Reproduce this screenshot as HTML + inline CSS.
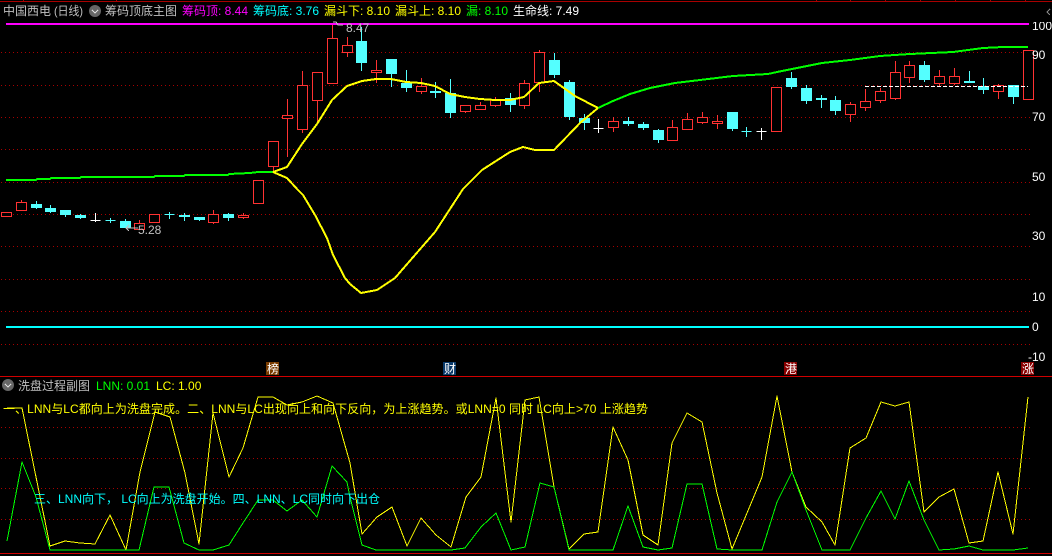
<!DOCTYPE html>
<html lang="zh"><head><meta charset="utf-8"><title>中国西电</title>
<style>
html,body{margin:0;padding:0;background:#000;width:1052px;height:556px;overflow:hidden}
svg{display:block;font-family:"Liberation Sans","WenQuanYi Zen Hei","Noto Sans CJK SC",sans-serif;font-size:12px}
svg path,svg rect,svg line,svg polyline{shape-rendering:crispEdges}
.r path,.r rect{stroke:#ff3232;fill:#000}
.c path,.c rect{stroke:#54ffff;fill:#54ffff}
.w path{stroke:#fff;fill:none}
.g{stroke:#a80000;stroke-width:1;stroke-dasharray:1 3}
.l{fill:none;stroke-linejoin:round}
.ax{fill:#fff;font-size:12px}
.mk{fill:#fff;font-size:12px}
</style></head><body>
<svg width="1052" height="556" viewBox="0 0 1052 556" xmlns="http://www.w3.org/2000/svg">
<defs><clipPath id="c100"><rect x="1030" y="22" width="22" height="12"/></clipPath></defs>
<rect width="1052" height="556" fill="#000"/>
<!-- frame lines -->
<line x1="0" x2="1052" y1="1.5" y2="1.5" stroke="#a80000"/>
<path d="M23.5 0V1M116.5 0V1M816.5 0V1M850.5 0V1M885.5 0V1M920.5 0V1M955.5 0V1M990.5 0V1M1025.5 0V1" stroke="#a80000"/>
<line x1="0" x2="1052" y1="376.5" y2="376.5" stroke="#d00000"/>
<line x1="0" x2="1052" y1="553.5" y2="553.5" stroke="#d00000"/>
<!-- grid -->
<g class="g">
<line x1="1" x2="1030" y1="52.5" y2="52.5"/><line x1="1" x2="1030" y1="85.5" y2="85.5"/>
<line x1="1" x2="1030" y1="117.5" y2="117.5"/><line x1="1" x2="1030" y1="149.5" y2="149.5"/>
<line x1="1" x2="1030" y1="182.5" y2="182.5"/><line x1="1" x2="1030" y1="214.5" y2="214.5"/>
<line x1="1" x2="1030" y1="246.5" y2="246.5"/><line x1="1" x2="1030" y1="279.5" y2="279.5"/>
<line x1="1" x2="1030" y1="311.5" y2="311.5"/><line x1="1" x2="1030" y1="344.5" y2="344.5"/>
<line x1="1" x2="1030" y1="427.5" y2="427.5"/><line x1="1" x2="1030" y1="458.5" y2="458.5"/>
<line x1="1" x2="1030" y1="488.5" y2="488.5"/><line x1="1" x2="1030" y1="519.5" y2="519.5"/>
</g>
<!-- red candles -->
<g class="r">
<rect x="1.5" y="212.5" width="10" height="4"/>
<path d="M21.5 200V203"/><rect x="16.5" y="202.5" width="10" height="8"/>
<path d="M139.5 220V224"/><rect x="134.5" y="223.5" width="10" height="6"/>
<rect x="149.5" y="214.5" width="10" height="8"/>
<path d="M213.5 210V224"/><rect x="208.5" y="214.5" width="10" height="8"/>
<path d="M243.5 213V219"/><rect x="238.5" y="215.5" width="10" height="2"/>
<rect x="253.5" y="180.5" width="10" height="23"/>
<path d="M273.5 166V172"/><rect x="268.5" y="141.5" width="10" height="25"/>
<path d="M287.5 99V157"/><rect x="282.5" y="115.5" width="10" height="3"/>
<path d="M302.5 71V133"/><rect x="297.5" y="85.5" width="10" height="44"/>
<path d="M317.5 100V124"/><rect x="312.5" y="72.5" width="10" height="28"/>
<path d="M332.5 24V39"/><rect x="327.5" y="38.5" width="10" height="45"/>
<path d="M347.5 37V57"/><rect x="342.5" y="45.5" width="10" height="7"/>
<path d="M376.5 60V83"/><rect x="371.5" y="70.5" width="10" height="2"/>
<path d="M421.5 78V94"/><rect x="416.5" y="86.5" width="10" height="5"/>
<path d="M465.5 105V113"/><rect x="460.5" y="105.5" width="10" height="6"/>
<path d="M480.5 102V110"/><rect x="475.5" y="105.5" width="10" height="4"/>
<path d="M495.5 97V107"/><rect x="490.5" y="99.5" width="10" height="6"/>
<path d="M524.5 80V109"/><rect x="519.5" y="83.5" width="10" height="22"/>
<path d="M539.5 50V92"/><rect x="534.5" y="52.5" width="10" height="30"/>
<path d="M613.5 117V132"/><rect x="608.5" y="121.5" width="10" height="6"/>
<path d="M672.5 120V128"/><rect x="667.5" y="127.5" width="10" height="13"/>
<path d="M687.5 113V120"/><rect x="682.5" y="119.5" width="10" height="10"/>
<path d="M702.5 112V124"/><rect x="697.5" y="117.5" width="10" height="5"/>
<path d="M717.5 115V129"/><rect x="712.5" y="121.5" width="10" height="2"/>
<rect x="771.5" y="87.5" width="10" height="44"/>
<path d="M850.5 102V122"/><rect x="845.5" y="104.5" width="10" height="10"/>
<path d="M865.5 89V111"/><rect x="860.5" y="101.5" width="10" height="6"/>
<path d="M880.5 88V103"/><rect x="875.5" y="91.5" width="10" height="9"/>
<path d="M895.5 61V100"/><rect x="890.5" y="72.5" width="10" height="26"/>
<path d="M909.5 61V83"/><rect x="904.5" y="65.5" width="10" height="12"/>
<path d="M939.5 70V86"/><rect x="934.5" y="76.5" width="10" height="7"/>
<path d="M954.5 68V85"/><rect x="949.5" y="76.5" width="10" height="7"/>
<path d="M998.5 84V99"/><rect x="993.5" y="85.5" width="10" height="6"/>
<rect x="1023.5" y="50.5" width="10" height="49"/>
</g>
<!-- cyan candles -->
<g class="c">
<path d="M36.5 201V209"/><rect x="31.5" y="204.5" width="10" height="3"/>
<path d="M50.5 205V213"/><rect x="45.5" y="208.5" width="10" height="3"/>
<path d="M65.5 210V217"/><rect x="60.5" y="210.5" width="10" height="4"/>
<path d="M80.5 214V219"/><rect x="75.5" y="215.5" width="10" height="2"/>
<path d="M105.5 220.5H115.5M110.5 218V223"/>
<path d="M125.5 219V228"/><rect x="120.5" y="221.5" width="10" height="6"/>
<path d="M164.5 214.5H174.5M169.5 212V219"/>
<path d="M184.5 213V221"/><rect x="179.5" y="215.5" width="10" height="1"/>
<path d="M199.5 217V221"/><rect x="194.5" y="217.5" width="10" height="2"/>
<path d="M228.5 213V221"/><rect x="223.5" y="214.5" width="10" height="3"/>
<path d="M361.5 27V71"/><rect x="356.5" y="41.5" width="10" height="21"/>
<path d="M391.5 59V87"/><rect x="386.5" y="59.5" width="10" height="14"/>
<path d="M406.5 70V92"/><rect x="401.5" y="83.5" width="10" height="4"/>
<path d="M435.5 82V98"/><rect x="430.5" y="91.5" width="10" height="1"/>
<path d="M450.5 79V118"/><rect x="445.5" y="93.5" width="10" height="19"/>
<path d="M510.5 93V112"/><rect x="505.5" y="98.5" width="10" height="6"/>
<path d="M554.5 53V78"/><rect x="549.5" y="60.5" width="10" height="14"/>
<path d="M569.5 80V120"/><rect x="564.5" y="82.5" width="10" height="34"/>
<path d="M584.5 114V130"/><rect x="579.5" y="118.5" width="10" height="4"/>
<path d="M628.5 117V126"/><rect x="623.5" y="121.5" width="10" height="2"/>
<path d="M643.5 122V130"/><rect x="638.5" y="124.5" width="10" height="3"/>
<path d="M658.5 129V143"/><rect x="653.5" y="130.5" width="10" height="9"/>
<path d="M732.5 112V131"/><rect x="727.5" y="112.5" width="10" height="16"/>
<path d="M741.5 131.5H751.5M746.5 127V137"/>
<path d="M791.5 72V89"/><rect x="786.5" y="78.5" width="10" height="8"/>
<path d="M806.5 85V104"/><rect x="801.5" y="88.5" width="10" height="12"/>
<path d="M821.5 95V108"/><rect x="816.5" y="98.5" width="10" height="1"/>
<path d="M835.5 96V115"/><rect x="830.5" y="100.5" width="10" height="10"/>
<path d="M924.5 61V82"/><rect x="919.5" y="65.5" width="10" height="14"/>
<path d="M969.5 71V83"/><rect x="964.5" y="81.5" width="10" height="1"/>
<path d="M983.5 78V94"/><rect x="978.5" y="86.5" width="10" height="3"/>
<path d="M1013.5 97V104"/><rect x="1008.5" y="85.5" width="10" height="11"/>
</g>
<!-- white dojis -->
<g class="w">
<path d="M90.5 220.5H100.5M95.5 213V222"/>
<path d="M593.5 128.5H603.5M598.5 119V133"/>
<path d="M756.5 131.5H766.5M761.5 128V140"/>
</g>
<!-- dashed -->
<line x1="865" x2="1028" y1="86.5" y2="86.5" stroke="#fff" stroke-dasharray="4 2"/>
<!-- magenta / cyan -->
<rect x="6" y="23" width="1023" height="2" fill="#ff00ff"/>
<rect x="6" y="326" width="1023" height="2" fill="#00ffff"/>
<!-- life line green -->
<polyline class="l" stroke="#00ff00" stroke-width="2" points="6,180 36,180 37,179 50,179 51,178 80,178 81,177 154,177 155,176 184,176 185,175 228,175 229,174 250,173 258,172 273,172"/>
<polyline class="l" stroke="#00ff00" stroke-width="2" points="598,108 613,101 630,94 650,88 675,83 700,80 733,76 768,74 777,72 797,68 822,63 850,60 880,56 910,54 953,52 983,48 1003,47 1028,47"/>
<!-- yellow curves -->
<polyline class="l" stroke="#ffff00" stroke-width="2" points="273,172 287,167 302,144 317,124 332,100 347,86 362,81 376,79 391,79 406,82 421,83 435,86 450,94 465,97 480,99 495,100 510,100 524,97 539,83 554,81 575,96 598,108"/>
<polyline class="l" stroke="#ffff00" stroke-width="2" points="273,172 287,178 298,190 303,195 315,215 327,238 333,255 345,278 350,284 361,293 377,290 395,278 408,263 435,232 463,189 482,170 510,152 523,147 535,150 554,150 580,123 598,108"/>
<!-- extreme price annotations -->
<path d="M333 22H336L338 25H343" fill="none" stroke="#bfbfbf"/>
<text x="346" y="32" fill="#c0c0c0">8.47</text>
<path d="M129 225L126 228L129 231M126 228H138" fill="none" stroke="#bfbfbf"/>
<text x="138" y="234" fill="#c0c0c0">5.28</text>
<!-- axis labels -->
<text class="ax" x="1032" y="30" clip-path="url(#c100)">100</text>
<text class="ax" x="1032" y="59">90</text>
<text class="ax" x="1032" y="121">70</text>
<text class="ax" x="1032" y="181">50</text>
<text class="ax" x="1032" y="240">30</text>
<text class="ax" x="1032" y="301">10</text>
<text class="ax" x="1032" y="331">0</text>
<text class="ax" x="1028" y="361">-10</text>
<path d="M1050 9L1047 12L1050 15" fill="none" stroke="#888"/>
<!-- event markers -->
<rect x="266" y="362" width="13" height="13" fill="#7a3c00"/><text class="mk" x="267" y="373">榜</text>
<rect x="443" y="362" width="13" height="13" fill="#0a3a6a"/><text class="mk" x="444" y="373">财</text>
<rect x="784" y="362" width="13" height="13" fill="#880000"/><text class="mk" x="785" y="373">港</text>
<rect x="1021" y="362" width="13" height="13" fill="#880000"/><text class="mk" x="1022" y="373">涨</text>
<!-- header -->
<text x="3" y="15" fill="#c0c0c0">中国西电</text>
<text x="54" y="15" fill="#c0c0c0" textLength="29" lengthAdjust="spacingAndGlyphs">(日线)</text>
<circle cx="95" cy="11" r="6" fill="#666"/><path d="M92 10L95 13L98 10" fill="none" stroke="#ddd" stroke-width="1.2"/>
<text x="105" y="15" fill="#c0c0c0">筹码顶底主图</text>
<text x="182" y="15" fill="#ff00ff">筹码顶: 8.44</text>
<text x="253" y="15" fill="#00ffff">筹码底: 3.76</text>
<text x="324" y="15" fill="#ffff00">漏斗下: 8.10</text>
<text x="395" y="15" fill="#ffff00">漏斗上: 8.10</text>
<text x="466" y="15" fill="#00ff00">漏: 8.10</text>
<text x="513" y="15" fill="#ffffff">生命线: 7.49</text>
<!-- sub panel header -->
<circle cx="8" cy="385" r="6" fill="#666"/><path d="M5 384L8 387L11 384" fill="none" stroke="#ddd" stroke-width="1.2"/>
<text x="18" y="390" fill="#c0c0c0">洗盘过程副图</text>
<text x="96" y="390" fill="#00ff00">LNN: 0.01</text>
<text x="156" y="390" fill="#ffff00">LC: 1.00</text>
<!-- sub panel lines -->
<polyline class="l" stroke="#ffff00" stroke-width="1" points="7,408 22,408 50,546 65,541 80,543 95,544 110,515 126,550 140,472 155,412 170,417 185,473 199,544 213,413 229,477 243,448 258,397 273,397 287,405 302,402 317,396 333,403 350,463 362,534 377,517 392,507 407,546 421,518 436,535 451,547 466,497 481,477 496,398 511,522 525,400 539,397 554,487 569,549 584,534 598,532 613,427 628,460 643,535 658,545 672,443 687,413 702,422 717,493 732,549 747,513 762,477 777,396 792,472 806,507 822,522 835,545 850,448 866,438 881,402 895,406 909,402 924,512 939,497 954,489 969,543 983,541 998,472 1013,534 1028,397"/>
<polyline class="l" stroke="#00ff00" stroke-width="1" points="7,541 22,462 36,497 50,550 125,550 139,550 154,487 169,487 184,543 199,550 213,550 229,545 243,523 258,500 273,500 287,511 302,500 317,517 332,466 347,482 350,497 362,545 376,550 451,550 465,548 481,527 496,513 511,550 525,547 540,483 554,487 569,550 613,550 628,506 643,547 658,550 672,548 687,484 702,484 717,549 732,550 762,550 777,502 792,472 806,510 822,550 850,550 866,518 881,491 895,519 909,481 924,520 939,550 954,549 969,546 983,550 1013,550 1028,548"/>
<!-- annotations -->
<text x="3" y="413" fill="#ffff00" textLength="645" lengthAdjust="spacing">一、LNN与LC都向上为洗盘完成。二、LNN与LC出现向上和向下反向，为上涨趋势。或LNN=0 同时 LC向上&gt;70 上涨趋势</text>
<text x="34" y="503" fill="#00ffff">三、LNN向下， LC向上为洗盘开始。四、LNN、LC同时向下出仓</text>
</svg>
</body></html>
